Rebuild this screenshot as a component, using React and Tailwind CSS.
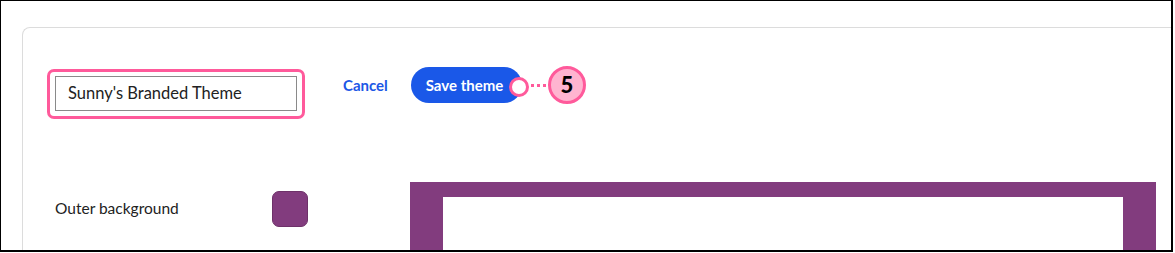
import React from 'react';

const font = { fontFamily: 'Lato, "Open Sans", sans-serif' };

function Marker() {
    return (
        <div className="absolute left-[-13px] top-[-1px] h-[38px] flex items-center pointer-events-none">
            <span className="w-[20px] h-[20px] mt-[4px] rounded-full bg-white border-[3px] border-[#ff5a9b] shrink-0"></span>
            <span className="flex gap-[3px] ml-[2px] mr-[2px]">
                <span className="w-[3px] h-[3px] bg-[#ff5a9b]"></span>
                <span className="w-[3px] h-[3px] bg-[#ff5a9b]"></span>
                <span className="w-[3px] h-[3px] bg-[#ff5a9b]"></span>
            </span>
            <span className="w-[38px] h-[38px] rounded-full bg-[#ffb4d0] border-[3px] border-[#ff5a9b] flex items-center justify-center text-[22px] font-black text-black leading-none shrink-0">
                5
            </span>
        </div>
    );
}

export default function App() {
    return (
        <div className="bg-white w-[1175px] h-[253px]" style={font}>
            <div className="w-[1173px] h-[252px] border-t border-l border-r-2 border-b-2 border-black overflow-hidden pt-[26px] pl-[21px]">
                <div className="w-[1200px] h-[300px] rounded-tl-[8px] border-t border-l border-[#dcdcdc] pt-[38px]">
                    {/* top row: name field + actions */}
                    <div className="flex items-start">
                        <div className="ml-[24px] mt-[3px] w-[258px] h-[50px] border-[3px] border-[#ff5a9b] rounded-[7px] pl-[5px] pt-[4px]">
                            <div className="w-[242px] h-[35px] border border-[#8a8a8a] flex items-center pl-[12px] text-[16.5px] text-[#222]">
                                Sunny's Branded Theme
                            </div>
                        </div>
                        <div className="ml-[38px] mt-[1px] w-[68px] h-[36px] flex items-center text-[15px] font-bold text-[#1c57e6]">
                            Cancel
                        </div>
                        <div className="relative mt-[1px]">
                            <button className="w-[111px] h-[36px] rounded-full bg-[#1a58e8] text-white text-[15px] font-bold pr-[4px]">
                                Save theme
                            </button>
                            <div className="absolute left-[111px] top-0">
                                <Marker />
                            </div>
                        </div>
                    </div>

                    {/* color row + preview */}
                    <div className="flex items-start mt-[63px]">
                        <div className="w-[387px] mt-[9px] h-[36px] flex items-center">
                            <span className="w-[249px] pl-[32px] text-[15.5px] text-[#222]">Outer background</span>
                            <span className="w-[36px] h-[36px] rounded-[7px] bg-[#823c7e] border border-[#6e3169]"></span>
                        </div>
                        <div className="w-[746px] h-[100px] bg-[#823c7e] pt-[15px] px-[33px]">
                            <div className="w-full h-full bg-white"></div>
                        </div>
                    </div>
                </div>
            </div>
        </div>
    );
}
